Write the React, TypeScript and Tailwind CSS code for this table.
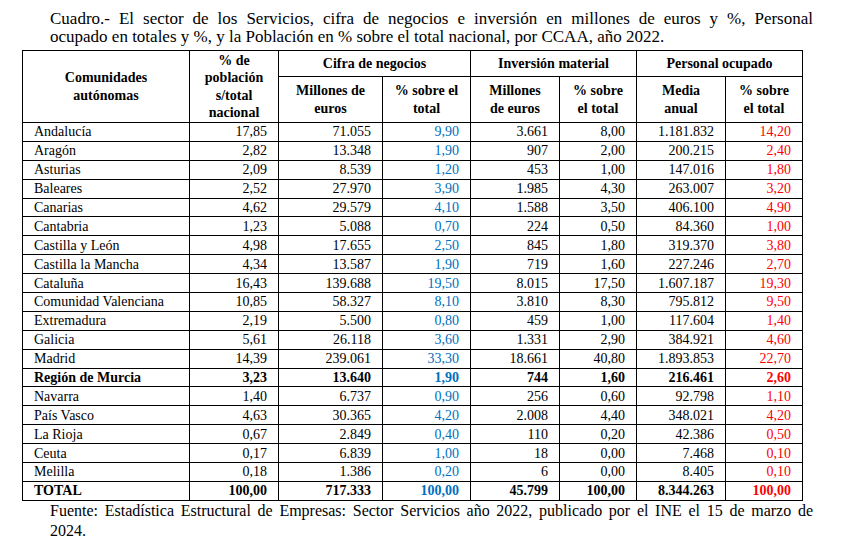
import React from 'react';

const ROWS = [
  ['Andalucía', '17,85', '71.055', '9,90', '3.661', '8,00', '1.181.832', '14,20'],
  ['Aragón', '2,82', '13.348', '1,90', '907', '2,00', '200.215', '2,40'],
  ['Asturias', '2,09', '8.539', '1,20', '453', '1,00', '147.016', '1,80'],
  ['Baleares', '2,52', '27.970', '3,90', '1.985', '4,30', '263.007', '3,20'],
  ['Canarias', '4,62', '29.579', '4,10', '1.588', '3,50', '406.100', '4,90'],
  ['Cantabria', '1,23', '5.088', '0,70', '224', '0,50', '84.360', '1,00'],
  ['Castilla y León', '4,98', '17.655', '2,50', '845', '1,80', '319.370', '3,80'],
  ['Castilla la Mancha', '4,34', '13.587', '1,90', '719', '1,60', '227.246', '2,70'],
  ['Cataluña', '16,43', '139.688', '19,50', '8.015', '17,50', '1.607.187', '19,30'],
  ['Comunidad Valenciana', '10,85', '58.327', '8,10', '3.810', '8,30', '795.812', '9,50'],
  ['Extremadura', '2,19', '5.500', '0,80', '459', '1,00', '117.604', '1,40'],
  ['Galicia', '5,61', '26.118', '3,60', '1.331', '2,90', '384.921', '4,60'],
  ['Madrid', '14,39', '239.061', '33,30', '18.661', '40,80', '1.893.853', '22,70'],
  ['Región de Murcia', '3,23', '13.640', '1,90', '744', '1,60', '216.461', '2,60'],
  ['Navarra', '1,40', '6.737', '0,90', '256', '0,60', '92.798', '1,10'],
  ['País Vasco', '4,63', '30.365', '4,20', '2.008', '4,40', '348.021', '4,20'],
  ['La Rioja', '0,67', '2.849', '0,40', '110', '0,20', '42.386', '0,50'],
  ['Ceuta', '0,17', '6.839', '1,00', '18', '0,00', '7.468', '0,10'],
  ['Melilla', '0,18', '1.386', '0,20', '6', '0,00', '8.405', '0,10'],
  ['TOTAL', '100,00', '717.333', '100,00', '45.799', '100,00', '8.344.263', '100,00'],
];

const BOLD_ROWS = ['Región de Murcia', 'TOTAL'];

function cellColor(i: number) {
  if (i === 3) return 'text-[#0070c0]';
  if (i === 7) return 'text-[#ff0000]';
  return 'text-black';
}

export default function App() {
  return (
    <div className="w-[844px] h-[546px] bg-white text-black font-['Liberation_Serif',serif] pt-[10px]">
      {/* Title, first line justified to full width */}
      <div className="ml-[50px] w-[763px] text-[17px] leading-[18px]">
        <p className="text-justify [text-align-last:justify]">
          Cuadro.- El sector de los Servicios, cifra de negocios e inversión en millones de euros y %, Personal
        </p>
        <p>ocupado en totales y %, y la Población en % sobre el total nacional, por CCAA, año 2022.</p>
      </div>

      <table className="mt-[4px] ml-[22px] w-[780px] table-fixed border-collapse font-['Liberation_Serif',serif] text-[14px]">
        <colgroup>
          <col className="w-[167px]" />
          <col className="w-[89px]" />
          <col className="w-[104px]" />
          <col className="w-[88px]" />
          <col className="w-[89px]" />
          <col className="w-[77px]" />
          <col className="w-[89px]" />
          <col className="w-[77px]" />
        </colgroup>
        <thead className="font-bold leading-[17.5px]">
          <tr className="h-[26px]">
            <th rowSpan={2} className="border border-black px-2 text-center align-middle">
              Comunidades
              <br />
              autónomas
            </th>
            <th rowSpan={2} className="border border-black px-1 text-center align-middle">
              % de
              <br />
              población
              <br />
              s/total
              <br />
              nacional
            </th>
            <th colSpan={2} className="border border-black text-center align-middle">Cifra de negocios</th>
            <th colSpan={2} className="border border-black text-center align-middle">Inversión material</th>
            <th colSpan={2} className="border border-black text-center align-middle">Personal ocupado</th>
          </tr>
          <tr className="h-[46px]">
            <th className="border border-black px-1 text-center align-middle">
              Millones de
              <br />
              euros
            </th>
            <th className="border border-black px-1 text-center align-middle">
              % sobre el
              <br />
              total
            </th>
            <th className="border border-black px-1 text-center align-middle">
              Millones
              <br />
              de euros
            </th>
            <th className="border border-black px-1 text-center align-middle">
              % sobre
              <br />
              el total
            </th>
            <th className="border border-black px-1 text-center align-middle">
              Media
              <br />
              anual
            </th>
            <th className="border border-black px-1 text-center align-middle">
              % sobre
              <br />
              el total
            </th>
          </tr>
        </thead>
        <tbody className="leading-[17px]">
          {ROWS.map(row => {
            const bold = BOLD_ROWS.includes(row[0]);
            return (
              <tr key={row[0]} className={`h-[18.9px] ${bold ? 'font-bold' : ''}`}>
                {row.map((v, i) => (
                  <td
                    key={i}
                    className={`border border-black p-0 whitespace-nowrap ${
                      i === 0 ? 'pl-[11px] text-left' : 'pr-[11px] text-right'
                    } ${cellColor(i)}`}
                  >
                    {v}
                  </td>
                ))}
              </tr>
            );
          })}
        </tbody>
      </table>

      {/* Source, first line justified to full width */}
      <div className="ml-[50px] w-[763px] text-[16px] leading-[20px]">
        <p className="text-justify [text-align-last:justify]">
          Fuente: Estadística Estructural de Empresas: Sector Servicios año 2022, publicado por el INE el 15 de marzo de
        </p>
        <p>2024.</p>
      </div>
    </div>
  );
}
